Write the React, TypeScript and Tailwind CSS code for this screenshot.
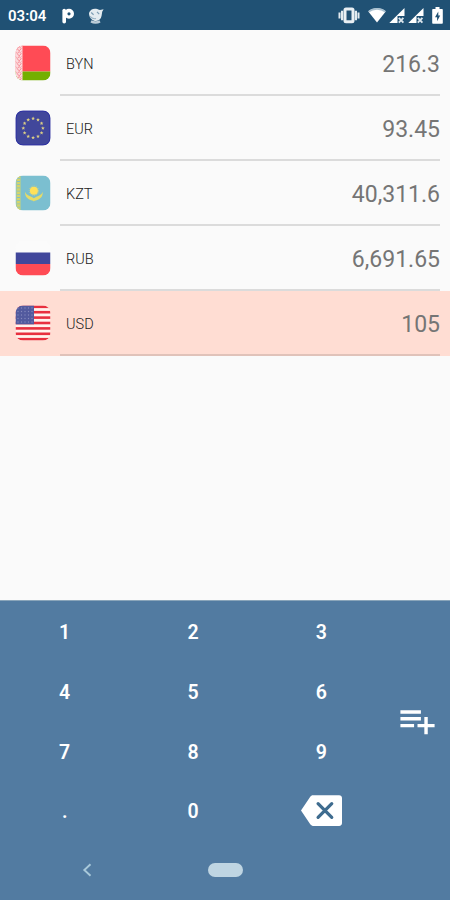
import { useState } from "react";
import type { ReactNode } from "react";

type Currency = {
  code: string;
  amount: string;
  flag: ReactNode;
};

const FlagFrame = ({ id, children }: { id: string; children: ReactNode }) => (
  <svg className="h-9 w-9 shrink-0" viewBox="-0.5 -0.5 36 36">
    <clipPath id={id}>
      <rect width="35" height="35" rx="7.5" />
    </clipPath>
    <g clipPath={`url(#${id})`}>{children}</g>
  </svg>
);

const BelarusFlag = () => (
  <FlagFrame id="flag-by">
    <rect width="35" height="26" fill="#ff4b55" />
    <rect y="26" width="35" height="9" fill="#73af00" />
    <rect width="7" height="35" fill="#fbd9dc" />
    {[1, 6, 11, 16, 21, 26, 31].map((y) => (
      <g key={y} stroke="#f78f97" strokeWidth="1" fill="none">
        <path d={`M3.7 ${y}l2 2.2-2 2.2-2-2.2z`} />
        <path d={`M0 ${y}l1.2 1M6.2 ${y}l1 -1`} />
      </g>
    ))}
  </FlagFrame>
);

const EuropeFlag = () => (
  <FlagFrame id="flag-eu">
    <rect width="35" height="35" fill="#41479b" />
    <rect x="0.5" y="0.5" width="34" height="34" rx="7" fill="none" stroke="#2c2fa6" />
    {Array.from({ length: 12 }, (_, i) => (
      <path
        key={i}
        d="M0-1.9l.55 1.2 1.3.1-1 .9.3 1.3L0 .9l-1.15.7.3-1.3-1-.9 1.3-.1z"
        fill="#d9cc85"
        transform={`translate(${17.6 + 9.8 * Math.sin((i * Math.PI) / 6)} ${
          17.6 - 9.6 * Math.cos((i * Math.PI) / 6)
        })`}
      />
    ))}
  </FlagFrame>
);

const KazakhstanFlag = () => (
  <FlagFrame id="flag-kz">
    <rect width="35" height="35" fill="#7bbfd0" />
    <path d="M3 0v35" stroke="#d8d568" strokeWidth="3.2" strokeDasharray="2.4 0.8" />
    <path d="M1.2 0v35M4.8 0v35" stroke="#b9cf8c" strokeWidth="0.8" />
    <circle cx="18.4" cy="15.2" r="4" fill="#ffe15a" />
    <circle cx="18.4" cy="15.2" r="4.7" fill="none" stroke="#d3d782" strokeWidth="0.8" strokeDasharray="1 1" />
    <path
      d="M9.6 16.3c.6 1.6 1.2 2.6 3 3.4 1.9.9 3.6 1.5 5.8 3 2.2-1.5 3.9-2.1 5.8-3 1.8-.8 2.4-1.8 3-3.4.3 4.4-2 6.8-4.8 7.9-1.6.7-2.9.6-4 1.8-1.1-1.2-2.4-1.1-4-1.8-2.8-1.1-5.1-3.5-4.8-7.9z"
      fill="#e5dc68"
    />
  </FlagFrame>
);

const RussiaFlag = () => (
  <FlagFrame id="flag-ru">
    <rect width="35" height="12" fill="#fbfbfb" />
    <rect y="12" width="35" height="11.5" fill="#41479b" />
    <rect y="23.5" width="35" height="11.5" fill="#ff4b55" />
  </FlagFrame>
);

const UsaFlag = () => (
  <FlagFrame id="flag-us">
    <rect width="35" height="35" fill="#fff3ee" />
    {[0, 1, 2, 3, 4, 5, 6].map((i) => (
      <rect key={i} y={i * 5.4} width="35" height="2.6" fill="#e8303f" />
    ))}
    <rect width="18.5" height="18.8" fill="#525a9e" />
    {[2.5, 6, 9.5, 13, 16.5].map((y) =>
      [2.5, 6, 9.5, 13, 16.5].map((x) => (
        <circle key={`${x}-${y}`} cx={x} cy={y} r="0.7" fill="#8489bd" />
      )),
    )}
  </FlagFrame>
);

const currencies: Currency[] = [
  { code: "BYN", amount: "216.3", flag: <BelarusFlag /> },
  { code: "EUR", amount: "93.45", flag: <EuropeFlag /> },
  { code: "KZT", amount: "40,311.6", flag: <KazakhstanFlag /> },
  { code: "RUB", amount: "6,691.65", flag: <RussiaFlag /> },
  { code: "USD", amount: "105", flag: <UsaFlag /> },
];

const keys = ["1", "2", "3", "4", "5", "6", "7", "8", "9", ".", "0"];

const SignalIcon = () => (
  <svg className="h-4 w-4" viewBox="0 0 16 16">
    <path d="M15.5 0v8H8.5v7H.3z" fill="#fff" />
    <path d="M9.8 9.8l4.6 4.8M14.4 9.8l-4.6 4.8" stroke="#dbe5ec" strokeWidth="1.9" />
  </svg>
);

const StatusBar = () => (
  <header className="flex h-[30px] items-center bg-[#205174] pt-px pr-[7px] pl-2 text-white">
    <span className="w-[54px] pt-0.5 text-[15px] leading-none font-semibold">03:04</span>
    <svg className="h-4 w-3" viewBox="0 0 12 16">
      <circle cx="7" cy="5.8" r="3.3" fill="none" stroke="#fff" strokeWidth="3.4" />
      <path d="M2.2 2.5v11.3" stroke="#fff" strokeWidth="3.6" strokeLinecap="round" />
    </svg>
    <svg className="ml-[14px] h-4 w-4" viewBox="0 0 16 16">
      <path
        d="M1 5C2 1.5 5 .3 8 .7c2 .3 2.8 1 4 1.3l3.6-.7-1.4 2.5-.6 4C13 11 11 13 8 13S1 10.5 1 5z"
        fill="#e3ebf0"
      />
      <path d="M3.2 4.5l2.4 2.2M9 3.8l2.2 2.4" fill="none" stroke="#7d9db3" strokeWidth="1.2" />
      <path d="M2 8.5c2 2 4 2.5 6 2" fill="none" stroke="#9bb5c6" strokeWidth="1.1" />
      <path d="M3 13.4c3 1.5 6 1.5 9 0" fill="none" stroke="#bccdd8" strokeWidth="2.4" />
    </svg>
    <div className="ml-auto flex items-center">
      <svg className="h-[17px] w-[22px]" viewBox="0 0 22 17">
        <path d="M1.5 5.5v6M20.5 5.5v6" stroke="#e3ebf0" strokeWidth="2" />
        <path d="M4.1 3.8v9.4M17.9 3.8v9.4" stroke="#e3ebf0" strokeWidth="2.2" />
        <rect x="7" y="2" width="8" height="12.8" rx="1" fill="none" stroke="#e9eff3" strokeWidth="3" />
      </svg>
      <svg className="ml-2 h-[15px] w-[18px]" viewBox="0 0 18 15">
        <path d="M9 14.6L.3 3.6C5-.8 13-.8 17.7 3.6z" fill="#fff" />
        <path d="M.8 3.7C5 -.1 13 -.1 17.2 3.7" fill="none" stroke="#a9c0cf" strokeWidth="1.6" />
      </svg>
      <div className="ml-[3px] flex gap-[3px]">
        <SignalIcon />
        <SignalIcon />
      </div>
      <svg className="ml-2 h-[17px] w-[11px]" viewBox="0 0 11 17">
        <path
          d="M3.5 0h4v2H10a.8.8 0 0 1 .8.8V16a.8.8 0 0 1-.8.8H1A.8.8 0 0 1 .2 16V2.8A.8.8 0 0 1 1 2h2.5z"
          fill="#fff"
        />
        <path d="M6.3 4.5L3 10.3h2.1v4L8.2 8.5H6.3z" fill="#205174" />
      </svg>
    </div>
  </header>
);

const CurrencyRow = ({
  currency,
  selected,
  onSelect,
}: {
  currency: Currency;
  selected: boolean;
  onSelect: () => void;
}) => (
  <li
    onClick={onSelect}
    className={`flex h-[65px] cursor-pointer pl-[15px] ${selected ? "bg-[#ffddd3]" : ""}`}
  >
    <div className="flex w-[45px] items-center">{currency.flag}</div>
    <div className="mr-[10px] flex flex-1 items-center justify-between border-b-2 border-black/12 pt-[5px] pl-[6px]">
      <span className="text-[14.5px] font-light text-[#222222]">{currency.code}</span>
      <span className="pt-0.5 text-[23px] text-[#757575]">{currency.amount}</span>
    </div>
  </li>
);

const Keypad = () => (
  <div className="flex h-[239px]">
    <div className="grid w-[385px] grid-cols-3 grid-rows-4">
      {keys.map((key) => (
        <button key={key} className="pt-1 pl-px text-[19.5px] leading-none font-semibold text-white">
          {key}
        </button>
      ))}
      <button aria-label="Backspace" className="flex items-center justify-center pl-px">
        <svg className="h-[41px] w-[41px]" viewBox="0 0 24 24">
          <path
            d="M22.3 3H7c-.69 0-1.23.35-1.59.88L0 12l5.41 8.11c.36.53.9.89 1.59.89h15.3c1.1 0 1.7-.7 1.7-1.7V4.7c0-1-.6-1.7-1.7-1.7z"
            fill="#fff"
          />
          <path d="M10 8l8 8M18 8l-8 8" stroke="#3f6c8f" strokeWidth="1.9" strokeLinecap="round" />
        </svg>
      </button>
    </div>
    <button aria-label="Add currency" className="flex flex-1 items-center justify-center">
      <svg className="h-[41px] w-[41px]" viewBox="0 0 24 24" fill="#fff">
        <path d="M14 10H2v2h12v-2zm0-4H2v2h12V6zm4 8v-4h-2v4h-4v2h4v4h2v-4h4v-2h-4zM2 16h8v-2H2v2z" />
      </svg>
    </button>
  </div>
);

const NavigationBar = () => (
  <nav className="flex h-[60px] items-center pl-[82px]">
    <svg className="h-[14px] w-[10px]" viewBox="0 0 10 14">
      <path d="M8.5 1.2L2.3 7l6.2 5.8" fill="none" stroke="#a9c9da" strokeWidth="1.9" />
    </svg>
    <div className="ml-[116px] h-[14px] w-[35px] rounded-full bg-[#bfd5e2]" />
  </nav>
);

const App = () => {
  const [selected, setSelected] = useState("USD");

  return (
    <div className="flex h-[900px] w-[450px] flex-col bg-[#fafafa] font-['Roboto',sans-serif]">
      <StatusBar />
      <ul className="flex-1 pt-[0.5px]">
        {currencies.map((currency) => (
          <CurrencyRow
            key={currency.code}
            currency={currency}
            selected={currency.code === selected}
            onSelect={() => setSelected(currency.code)}
          />
        ))}
      </ul>
      <footer className="border-t border-[#8aa5ba] bg-[#527ba1]">
        <Keypad />
        <NavigationBar />
      </footer>
    </div>
  );
};

export default App;
